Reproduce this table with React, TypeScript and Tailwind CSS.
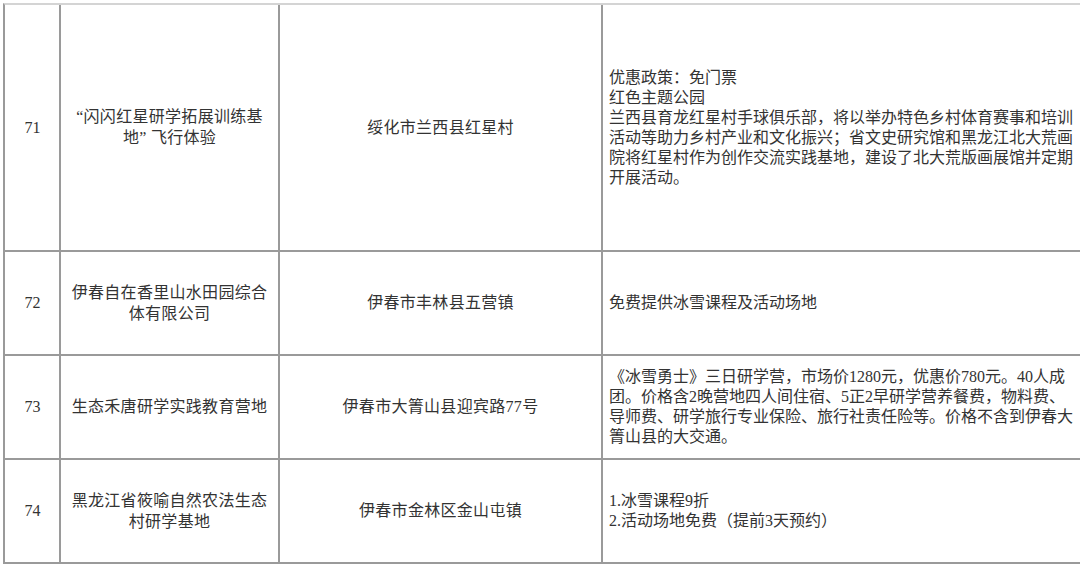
import React from "react";

const font = { fontFamily: '"Liberation Serif", "Noto Sans CJK SC", serif' };

type Row = { no: string; name: string[]; addr: string; policy: string[]; h: string };

const rows: Row[] = [
  {
    no: "71",
    name: ["“闪闪红星研学拓展训练基", "地” 飞行体验"],
    addr: "绥化市兰西县红星村",
    policy: [
      "优惠政策：免门票",
      "红色主题公园",
      "兰西县育龙红星村手球俱乐部，将以举办特色乡村体育赛事和培训",
      "活动等助力乡村产业和文化振兴；省文史研究馆和黑龙江北大荒画",
      "院将红星村作为创作交流实践基地，建设了北大荒版画展馆并定期",
      "开展活动。",
    ],
    h: "h-[247px]",
  },
  {
    no: "72",
    name: ["伊春自在香里山水田园综合", "体有限公司"],
    addr: "伊春市丰林县五营镇",
    policy: ["免费提供冰雪课程及活动场地"],
    h: "h-[104px]",
  },
  {
    no: "73",
    name: ["生态禾唐研学实践教育营地"],
    addr: "伊春市大箐山县迎宾路77号",
    policy: [
      "《冰雪勇士》三日研学营，市场价1280元，优惠价780元。40人成",
      "团。价格含2晚营地四人间住宿、5正2早研学营养餐费，物料费、",
      "导师费、研学旅行专业保险、旅行社责任险等。价格不含到伊春大",
      "箐山县的大交通。",
    ],
    h: "h-[104px]",
  },
  {
    no: "74",
    name: ["黑龙江省筱喻自然农法生态", "村研学基地"],
    addr: "伊春市金林区金山屯镇",
    policy: ["1.冰雪课程9折", "2.活动场地免费（提前3天预约）"],
    h: "h-[104px]",
  },
];

export default function App() {
  return (
    <div className="w-[1080px] h-[564px] overflow-hidden bg-white text-[#333333]" style={font}>
      <div className="ml-[3px] mt-[3px] border-l-2 border-t-2 border-l-[#9a9a9a] border-t-[#d4d4d4] grid grid-cols-[56px_219px_323px_477px]">
        {rows.map((r) => (
          <React.Fragment key={r.no}>
            <div className={`${r.h} border-r-2 border-b-2 border-[#9a9a9a] flex items-center justify-center text-[16px] pl-[1px]`}>
              {r.no}
            </div>
            <div className={`${r.h} border-r-2 border-b-2 border-[#9a9a9a] flex flex-col items-center justify-center text-[16px] leading-[21px] tracking-[0.3px] pb-[1px]`}>
              {r.name.map((l, i) => (
                <div key={i} className="whitespace-pre">{l}</div>
              ))}
            </div>
            <div className={`${r.h} border-r-2 border-b-2 border-[#9a9a9a] flex items-center justify-center text-[16px] tracking-[0.3px]`}>
              {r.addr}
            </div>
            <div className={`${r.h} border-b-2 border-[#9a9a9a] flex flex-col justify-center pl-[6px] text-[16px] leading-[20px]`}>
              {r.policy.map((l, i) => (
                <div key={i} className="whitespace-nowrap">{l}</div>
              ))}
            </div>
          </React.Fragment>
        ))}
      </div>
    </div>
  );
}
